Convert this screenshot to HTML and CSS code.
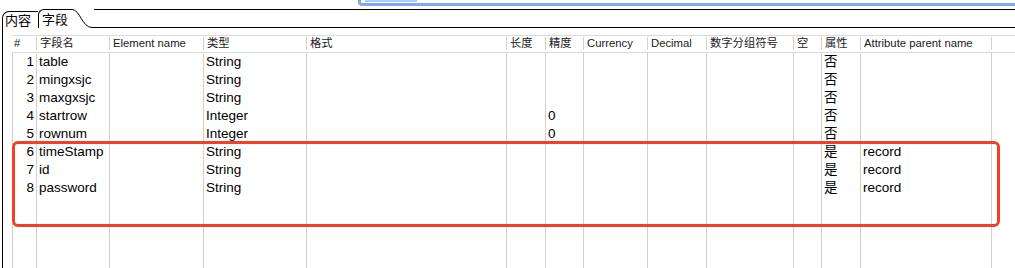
FILE: index.html
```html
<!DOCTYPE html>
<html lang="zh-CN">
<head>
    <meta charset="UTF-8">
    <title>字段</title>
    <link rel="stylesheet" href="styles.css">
</head>
<body>
    <div class="float-edge"><div class="float-fill"></div></div>

    <div class="tabbar">
        <div class="tab tab-inactive">内容</div>
        <div class="tab tab-active">字段</div>
        <svg class="tab-curve" width="24" height="19" viewBox="0 0 24 19">
            <path d="M0 0.5 H2 C10 0.5 12 18.5 22 18.5 H24" fill="none" stroke="#000" stroke-width="1"/>
        </svg>
        <div class="tab-rest"></div>
    </div>

    <div class="pane">
        <div class="grid" id="fieldGrid">
            <div class="th first"><span>#</span></div>
            <div class="th"><span>字段名</span></div>
            <div class="th"><span>Element name</span></div>
            <div class="th"><span>类型</span></div>
            <div class="th"><span>格式</span></div>
            <div class="th"><span>长度</span></div>
            <div class="th"><span>精度</span></div>
            <div class="th"><span>Currency</span></div>
            <div class="th"><span>Decimal</span></div>
            <div class="th"><span>数字分组符号</span></div>
            <div class="th"><span>空</span></div>
            <div class="th"><span>属性</span></div>
            <div class="th"><span>Attribute parent name</span></div>
            <div class="th"><span></span></div>
        </div>
        <div class="highlight"></div>
    </div>

    <script>
        document.addEventListener("DOMContentLoaded", function () {
            const grid = document.getElementById("fieldGrid");
            const fields = [
                ["1", "table", "", "String", "", "", "", "", "", "", "", "否", "", ""],
                ["2", "mingxsjc", "", "String", "", "", "", "", "", "", "", "否", "", ""],
                ["3", "maxgxsjc", "", "String", "", "", "", "", "", "", "", "否", "", ""],
                ["4", "startrow", "", "Integer", "", "", "0", "", "", "", "", "否", "", ""],
                ["5", "rownum", "", "Integer", "", "", "0", "", "", "", "", "否", "", ""],
                ["6", "timeStamp", "", "String", "", "", "", "", "", "", "", "是", "record", ""],
                ["7", "id", "", "String", "", "", "", "", "", "", "", "是", "record", ""],
                ["8", "password", "", "String", "", "", "", "", "", "", "", "是", "record", ""]
            ];

            // one empty row at the end stretches the column lines down
            fields.push(new Array(14).fill(""));

            fields.forEach(function (row) {
                row.forEach(function (value, i) {
                    const cell = document.createElement("div");
                    cell.className = i === 0 ? "td num" : "td";
                    cell.textContent = value;
                    grid.appendChild(cell);
                });
            });
        });
    </script>
</body>
</html>
```

FILE: styles.css
```css
html, body {
    height: 100%;
}

body {
    margin: 0;
    background-color: #fff;
    color: #000;
    font-family: "Liberation Sans", Arial, "Noto Sans CJK SC", sans-serif;
    display: flex;
    flex-direction: column;
    overflow: hidden;
}

.float-edge {
    position: absolute;
    top: 0;
    left: 358px;
    right: 0;
    height: 6px;
    box-sizing: border-box;
    border-left: 3px solid #82a8f0;
    border-bottom: 3px solid #82a8f0;
    border-bottom-left-radius: 4px;
}

.float-fill {
    margin-left: 4px;
    width: 52px;
    height: 2px;
    background-color: #a9cdf8;
}

.tabbar {
    display: flex;
    align-items: flex-end;
    height: 28px;
    flex-shrink: 0;
}

.tab {
    box-sizing: border-box;
    border-left: 1px solid #000;
    border-top: 1px solid #000;
    font-size: 13px;
    line-height: 15px;
    font-family: "Noto Sans CJK SC", sans-serif;
}

.tab-inactive {
    margin-left: 2px;
    width: 36px;
    height: 17px;
    padding-left: 2px;
    border-top-left-radius: 7px;
}

.tab-active {
    width: 32px;
    height: 19px;
    padding: 1px 0 0 3px;
    border-top-left-radius: 6px;
}

.tab-curve {
    display: block;
    flex-shrink: 0;
}

.tab-rest {
    flex: 1;
    height: 19px;
    box-sizing: border-box;
    border-top: 1px solid #000;
    border-bottom: 1px solid #000;
}

.pane {
    position: relative;
    flex: 1;
    margin-left: 2px;
    border-left: 1px solid #000;
    padding: 7px 0 0 9px;
    display: flex;
    flex-direction: column;
    min-height: 0;
}

.grid {
    flex: 1;
    display: grid;
    grid-template-columns: 24px 73px 94px 103px 200px 39px 38px 64px 59px 87px 28px 39px 131px 1fr;
    grid-template-rows: 18px repeat(8, 18px) 1fr;
}

.th {
    box-sizing: border-box;
    height: 18px;
    border-top: 1px solid #dadada;
    border-bottom: 1px solid #dadada;
    padding-top: 1px;
    font-size: 11.3px;
    color: #1a1a1a;
    white-space: nowrap;
    overflow: hidden;
}

.th span {
    display: block;
    height: 13px;
    line-height: 13px;
    border-left: 1px solid #d2d2d2;
    padding-left: 3px;
}

.th.first span {
    border-left-color: transparent;
    padding-left: 1px;
}

.td {
    box-sizing: border-box;
    border-left: 1px solid #cfcfcf;
    padding-left: 2px;
    font-size: 13.5px;
    line-height: 18px;
    white-space: nowrap;
    overflow: hidden;
}

.td.num {
    text-align: right;
    padding: 0 2px 0 0;
}

.highlight {
    position: absolute;
    top: 113px;
    left: 9px;
    width: 988px;
    height: 86px;
    box-sizing: border-box;
    border: 3px solid #f04128;
    border-radius: 6px;
}
```
